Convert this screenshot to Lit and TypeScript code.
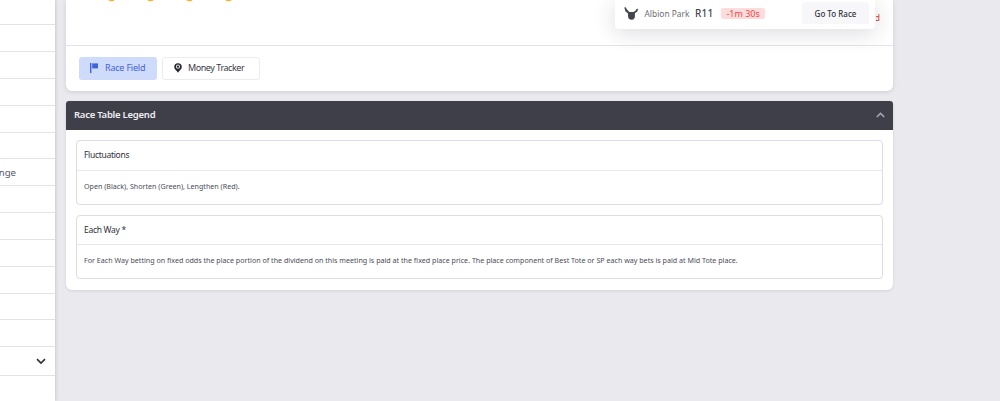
import { LitElement, html, css } from "lit";
import { customElement } from "lit/decorators.js";

const star = html`<svg class="star" viewBox="0 0 12 12" width="11" height="11"><circle cx="6" cy="6" r="4.2" fill="#f7b21d"/></svg>`;

@customElement("app-root")
export class AppRoot extends LitElement {
  static styles = css`
    :host {
      display: flex;
      width: 1000px;
      height: 401px;
      overflow: hidden;
      background: #e9e9ee;
      font-family: "Noto Sans", sans-serif;
      color: #33333d;
    }
    .side {
      width: 55px;
      height: 401px;
      flex: none;
      background: #fff;
      box-shadow: 1px 0 3px rgba(60, 60, 80, 0.18);
      display: flex;
      flex-direction: column;
      overflow: hidden;
    }
    .row {
      flex: none;
      height: 25.85px;
      border-bottom: 1px solid #e2e2e7;
      display: flex;
      align-items: center;
      font-size: 9.6px;
      color: #56565f;
      box-sizing: content-box;
    }
    .row.first { height: 24.2px; }
    .row.last { height: 28px; justify-content: flex-end; padding-right: 9px; padding-bottom: 0; }
    .clip {
      width: 16px;
      overflow: hidden;
      display: flex;
      justify-content: flex-end;
      white-space: nowrap;
    }
    .main {
      width: 827px;
      margin-left: 11px;
      display: flex;
      flex-direction: column;
      gap: 10px;
      flex: none;
    }
    .card {
      position: relative;
      height: 91px;
      background: #fff;
      border-radius: 0 0 6px 6px;
      box-shadow: 0 1px 4px rgba(60, 60, 80, 0.16);
      display: flex;
      flex-direction: column;
    }
    .top {
      height: 45px;
      flex: none;
      border-bottom: 1.5px solid #e4e4e8;
      box-sizing: content-box;
    }
    .stars {
      display: flex;
      gap: 28.2px;
      margin-left: 39.5px;
      margin-top: -8px;
    }
    .star { flex: none; display: block; }
    .tabs {
      display: flex;
      gap: 5px;
      padding: 10.5px 13px 0;
    }
    .tab {
      height: 23px;
      box-sizing: border-box;
      border-radius: 3px;
      display: flex;
      align-items: center;
      white-space: nowrap;
      padding-bottom: 1px;
    }
    .tab.on {
      width: 78px;
      background: #cfdbfb;
      color: #3f63d8;
      padding-left: 11px;
      gap: 7px;
      font-size: 9px;
      letter-spacing: -0.2px;
    }
    .tab.off {
      width: 98px;
      border: 1px solid #ececf0;
      background: #fff;
      color: #3a3a46;
      padding-left: 11px;
      gap: 6px;
      font-size: 9px;
      letter-spacing: -0.45px;
    }
    .pop {
      position: absolute;
      left: 549px;
      top: 0;
      width: 260px;
      height: 29px;
      box-sizing: border-box;
      background: #fff;
      border-radius: 0 0 4px 4px;
      box-shadow: 0 4px 22px rgba(40, 40, 60, 0.16);
      display: flex;
      align-items: center;
      padding: 0 6px 3px 9px;
    }
    .venue { font-size: 8.4px; color: #6d6d75; margin-left: 5.5px; white-space: nowrap; }
    .race { font-size: 10px; font-weight: 500; color: #44444c; margin-left: 5.5px; letter-spacing: 0.3px; }
    .time {
      margin-left: 7.5px;
      height: 11px;
      width: 44px;
      background: #ffdcdc;
      border-radius: 2px;
      color: #ef4a4a;
      font-size: 9px;
      line-height: 11px;
      text-align: center;
      white-space: nowrap;
    }
    .go {
      margin-left: auto;
      width: 67px;
      height: 22px;
      background: #f7f7f9;
      border-radius: 3px;
      font-size: 8px;
      font-weight: 500;
      color: #33333d;
      display: flex;
      align-items: center;
      justify-content: center;
    }
    .red {
      position: absolute;
      left: 810px;
      top: 12px;
      font-size: 9px;
      line-height: 12px;
      color: #e0402a;
      width: 4px;
      overflow: hidden;
      display: flex;
      justify-content: flex-end;
    }
    .legend {
      height: 189px;
      background: #fff;
      border-radius: 3px 3px 6px 6px;
      box-shadow: 0 1px 3px rgba(60, 60, 80, 0.12);
      display: flex;
      flex-direction: column;
    }
    .lhead {
      height: 29px;
      box-sizing: border-box;
      flex: none;
      background: #3f3f4a;
      border-radius: 3px 3px 0 0;
      display: flex;
      align-items: center;
      justify-content: space-between;
      padding: 0 8px 2px;
      color: #eeeef2;
      font-size: 9.5px;
      font-weight: 600;
      letter-spacing: -0.25px;
    }
    .lbody {
      padding: 10px 10px 0;
      display: flex;
      flex-direction: column;
      gap: 10px;
    }
    .box {
      height: 64.5px;
      box-sizing: border-box;
      border: 1px solid #dcdce2;
      border-radius: 4px;
      display: flex;
      flex-direction: column;
    }
    .bh {
      height: 29.6px;
      flex: none;
      border-bottom: 1.3px solid #e8e8ec;
      box-sizing: border-box;
      display: flex;
      align-items: center;
      padding: 0 0 1px 7px;
      font-size: 8.5px;
      letter-spacing: -0.3px;
      color: #2f2f3a;
    }
    .bb {
      flex: 1;
      display: flex;
      align-items: center;
      padding: 0 0 3px 7px;
      font-size: 7.13px;
      color: #4c4c58;
      white-space: nowrap;
    }
  `;

  render() {
    return html`
      <div class="side">
        <div class="row first"></div>
        ${[0, 1, 2, 3, 4].map(() => html`<div class="row"></div>`)}
        <div class="row"><span class="clip">Exchange</span></div>
        ${[0, 1, 2, 3, 4, 5].map(() => html`<div class="row"></div>`)}
        <div class="row last">
          <svg width="10" height="7" viewBox="0 0 10 7"><path d="M1 1.2 5 5l4-3.8" fill="none" stroke="#33333d" stroke-width="1.7"/></svg>
        </div>
      </div>
      <div class="main">
        <div class="card">
          <div class="top">
            <div class="stars">${star}${star}${star}${star}</div>
          </div>
          <div class="tabs">
            <div class="tab on">
              <svg width="8" height="10" viewBox="0 0 8 10"><path d="M0 0h1.4v10H0z" fill="#3f63d8"/><path d="M2.2 0.4H8v5H2.2z" fill="#3f63d8"/></svg>
              Race Field
            </div>
            <div class="tab off">
              <svg width="8" height="10" viewBox="0 0 8 10"><path d="M4 0.2a3.8 3.8 0 0 1 3.8 3.7c0 2.1-2.2 3.1-3.8 5.9C2.4 7 0.2 6 0.2 3.9A3.8 3.8 0 0 1 4 0.2z" fill="#26262c"/><circle cx="4" cy="3.7" r="2.1" fill="#e4e4e8"/><circle cx="4" cy="3.7" r="1.1" fill="#26262c"/></svg>
              Money Tracker
            </div>
          </div>
          <div class="red">Abandoned</div>
          <div class="pop">
            <svg width="15" height="13" viewBox="0 0 15 13"><path d="M0.3 0.6 1.6 0.3 3 2.6 5.4 5h3.8l2.4-1.2.8-1.7 1.6-.4-.5 2.6-2.6 2v2.3A3.5 3.5 0 0 1 7.7 12.8 3.7 3.7 0 0 1 4 9.1V6.6L1.4 4.2z" fill="#45454d"/></svg>
            <span class="venue">Albion Park</span>
            <span class="race">R11</span>
            <span class="time">-1m 30s</span>
            <div class="go">Go To Race</div>
          </div>
        </div>
        <div class="legend">
          <div class="lhead">
            <span>Race Table Legend</span>
            <svg width="9" height="6" viewBox="0 0 9 6"><path d="M0.8 5 4.5 1.4 8.2 5" fill="none" stroke="#a9a9b2" stroke-width="1.5"/></svg>
          </div>
          <div class="lbody">
            <div class="box">
              <div class="bh">Fluctuations</div>
              <div class="bb">Open (Black), Shorten (Green), Lengthen (Red).</div>
            </div>
            <div class="box">
              <div class="bh">Each Way *</div>
              <div class="bb">For Each Way betting on fixed odds the place portion of the dividend on this meeting is paid at the fixed place price. The place component of Best Tote or SP each way bets is paid at Mid Tote place.</div>
            </div>
          </div>
        </div>
      </div>
    `;
  }
}
